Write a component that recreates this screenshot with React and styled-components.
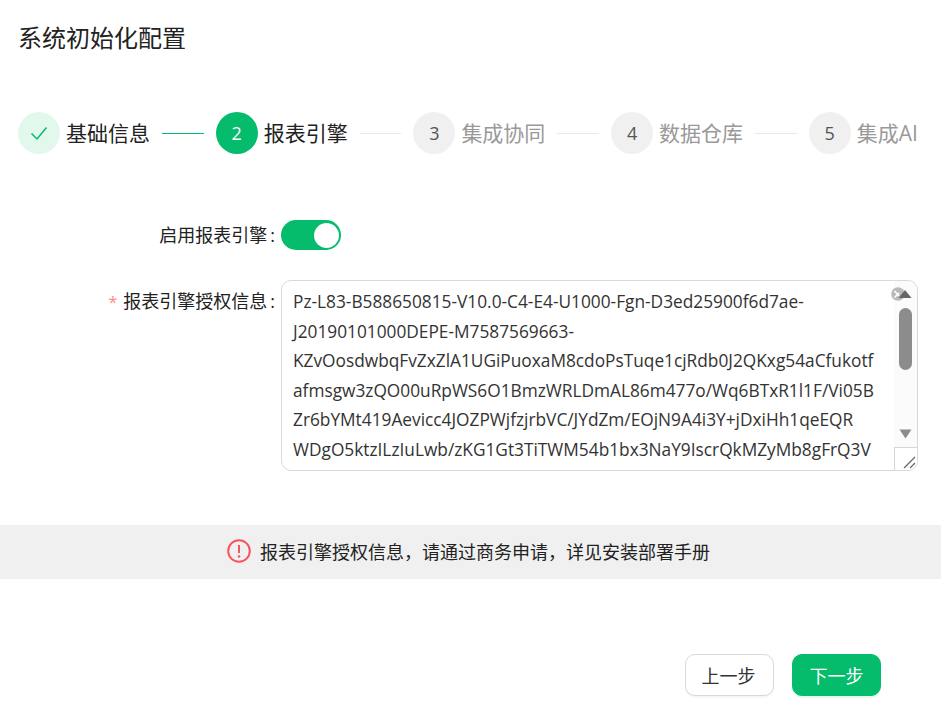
import { Fragment } from "react";
import styled, { createGlobalStyle } from "styled-components";

const GREEN = "#05bb6c";

const Global = createGlobalStyle`
  html, body {
    margin: 0;
    padding: 0;
    background: #fff;
  }
  * {
    box-sizing: border-box;
  }
`;

const Page = styled.div`
  width: 941px;
  height: 716px;
  overflow: hidden;
  font-family: "Open Sans", "Noto Sans CJK SC", sans-serif;
  color: #222;
  display: flex;
  flex-direction: column;
`;

const Title = styled.h1`
  margin: 0;
  padding: 21px 0 0 18px;
  height: 112px;
  font-size: 24px;
  line-height: 33px;
  font-weight: 400;
`;

const Steps = styled.div`
  display: flex;
  align-items: center;
  height: 42px;
  padding-left: 18px;
  white-space: nowrap;
`;

const Circle = styled.div`
  width: 42px;
  height: 42px;
  border-radius: 50%;
  flex: none;
  display: flex;
  align-items: center;
  justify-content: center;
  font-size: 18px;
  background: ${(p) =>
    p.$state === "done" ? "#e2f8ec" : p.$state === "active" ? GREEN : "#f0f0f0"};
  color: ${(p) => (p.$state === "active" ? "#fff" : "#555")};
`;

const StepLabel = styled.span`
  margin-left: 6px;
  font-size: 21px;
  line-height: 42px;
  color: ${(p) => (p.$state === "todo" ? "#999" : "#222")};
`;

const Connector = styled.div`
  width: 41.7px;
  height: 1px;
  margin: 0 12px;
  flex: none;
  background: ${(p) => (p.$done ? GREEN : "#e8e8e8")};
`;

const FormRow = styled.div`
  display: grid;
  grid-template-columns: 275px 637px;
  column-gap: 6px;
  margin-top: ${(p) => p.$top}px;
`;

const Label = styled.label`
  font-size: 18px;
  line-height: ${(p) => p.$height}px;
  text-align: right;
  white-space: nowrap;
  color: #222;
`;

const Star = styled.span`
  color: #f88;
  margin-right: 6px;
  font-size: 16px;
`;

const Colon = styled.span`
  margin-left: 3px;
`;

const Switch = styled.div`
  width: 60px;
  height: 30px;
  border-radius: 15px;
  background: ${GREEN};
  display: flex;
  align-items: center;
  justify-content: flex-end;
  padding-right: 2px;
`;

const Knob = styled.div`
  width: 25px;
  height: 25px;
  border-radius: 50%;
  background: #fff;
`;

const TextBox = styled.div`
  position: relative;
  height: 191px;
  border: 1px solid #d9d9d9;
  border-radius: 10px;
  padding: 6px 11px;
  overflow: hidden;
  font-size: 17.3px;
  line-height: 29.5px;
  color: #333;
`;

const TextLine = styled.div`
  white-space: nowrap;
`;

const ScrollTrack = styled.div`
  position: absolute;
  top: 0;
  right: 0;
  bottom: 0;
  width: 23px;
  background: #fbfbfb;
`;

const Thumb = styled.div`
  position: absolute;
  top: 27px;
  left: 5px;
  width: 13px;
  height: 62px;
  border-radius: 7px;
  background: #8c8c8c;
`;

const ArrowIcon = styled.svg`
  position: absolute;
  display: block;
  top: ${(p) => p.$top}px;
  left: ${(p) => p.$left}px;
`;

const Resizer = styled.div`
  position: absolute;
  right: 0;
  bottom: 0;
  width: 23px;
  height: 23px;
  background: #fff;
  border-left: 1px solid #d6d6d6;
  border-top: 1px solid #d6d6d6;
`;

const Banner = styled.div`
  margin-top: 54px;
  height: 54px;
  padding: 0 4px 2px 0;
  background: #f0f0f0;
  display: flex;
  align-items: center;
  justify-content: center;
  gap: 9px;
  font-size: 18px;
  color: #222;
`;

const Footer = styled.div`
  margin-top: 75px;
  padding-right: 60px;
  display: flex;
  justify-content: flex-end;
  gap: 18px;
`;

const Button = styled.button`
  width: 89px;
  height: 42px;
  border-radius: 10px;
  font-family: inherit;
  font-size: 18px;
  padding: 0 ${(p) => (p.$primary ? 0 : 2)}px 0 0;
  border: 1px solid ${(p) => (p.$primary ? GREEN : "#d9d9d9")};
  background: ${(p) => (p.$primary ? GREEN : "#fff")};
  color: ${(p) => (p.$primary ? "#fff" : "#333")};
  box-shadow: 0 2px 0 ${(p) => (p.$primary ? "#e6f8ef" : "#f6f6f6")};
`;

const licence = [
  "Pz-L83-B588650815-V10.0-C4-E4-U1000-Fgn-D3ed25900f6d7ae-",
  "J20190101000DEPE-M7587569663-",
  "KZvOosdwbqFvZxZlA1UGiPuoxaM8cdoPsTuqe1cjRdb0J2QKxg54aCfukotf",
  "afmsgw3zQO00uRpWS6O1BmzWRLDmAL86m477o/Wq6BTxR1l1F/Vi05B",
  "Zr6bYMt419Aevicc4JOZPWjfzjrbVC/JYdZm/EOjN9A4i3Y+jDxiHh1qeEQR",
  "WDgO5ktzILzIuLwb/zKG1Gt3TiTWM54b1bx3NaY9IscrQkMZyMb8gFrQ3V",
];

const steps = [
  { n: 1, label: "基础信息", state: "done" },
  { n: 2, label: "报表引擎", state: "active" },
  { n: 3, label: "集成协同", state: "todo" },
  { n: 4, label: "数据仓库", state: "todo" },
  { n: 5, label: "集成AI", state: "todo" },
];

function Stepper() {
  return (
    <Steps>
      {steps.map((s, i) => (
        <Fragment key={s.n}>
          {i > 0 && <Connector $done={i === 1} />}
          <Circle $state={s.state}>
            {s.state === "done" ? (
              <svg width="18" height="18" viewBox="0 0 18 18" fill="none">
                <path d="M1.5 9.5 L7 15 L16.5 3.5" stroke={GREEN} strokeWidth="1.5" />
              </svg>
            ) : (
              s.n
            )}
          </Circle>
          <StepLabel $state={s.state}>{s.label}</StepLabel>
        </Fragment>
      ))}
    </Steps>
  );
}

function Scrollbar() {
  return (
    <ScrollTrack>
      <ArrowIcon $top={5} $left={-3} width="26" height="16" viewBox="0 0 26 16">
        <circle cx="7" cy="8" r="6.8" fill="#b9b9b9" />
        <path d="M3.5 11.5 L8 7 M3.5 5 L8 10" stroke="#fff" strokeWidth="1.6" />
        <path d="M7.5 12 L14 4 L20.5 12 Z" fill="#666" />
      </ArrowIcon>
      <Thumb />
      <ArrowIcon $top={148} $left={5} width="13" height="10" viewBox="0 0 13 10">
        <path d="M0.5 0.5 H12.5 L6.5 9.5 Z" fill="#8c8c8c" />
      </ArrowIcon>
      <Resizer>
        <svg width="21" height="21" viewBox="0 0 21 21" fill="none">
          <path d="M9 20 L20 9 M15 20 L20 15" stroke="#666" strokeWidth="1.2" />
        </svg>
      </Resizer>
    </ScrollTrack>
  );
}

export default function App() {
  return (
    <Page>
      <Global />
      <Title>系统初始化配置</Title>
      <Stepper />
      <FormRow $top={66}>
        <Label $height={30}>
          启用报表引擎<Colon>:</Colon>
        </Label>
        <Switch>
          <Knob />
        </Switch>
      </FormRow>
      <FormRow $top={30}>
        <Label $height={42}>
          <Star>*</Star>报表引擎授权信息<Colon>:</Colon>
        </Label>
        <TextBox>
          {licence.map((line) => (
            <TextLine key={line}>{line}</TextLine>
          ))}
          <Scrollbar />
        </TextBox>
      </FormRow>
      <Banner>
        <svg width="24" height="24" viewBox="0 0 24 24" fill="none">
          <circle cx="12" cy="12" r="10.8" stroke="#f8545c" strokeWidth="2" />
          <path d="M12 6 V14" stroke="#f8545c" strokeWidth="2" />
          <circle cx="12" cy="17.5" r="1.3" fill="#f8545c" />
        </svg>
        报表引擎授权信息，请通过商务申请，详见安装部署手册
      </Banner>
      <Footer>
        <Button>上一步</Button>
        <Button $primary>下一步</Button>
      </Footer>
    </Page>
  );
}
